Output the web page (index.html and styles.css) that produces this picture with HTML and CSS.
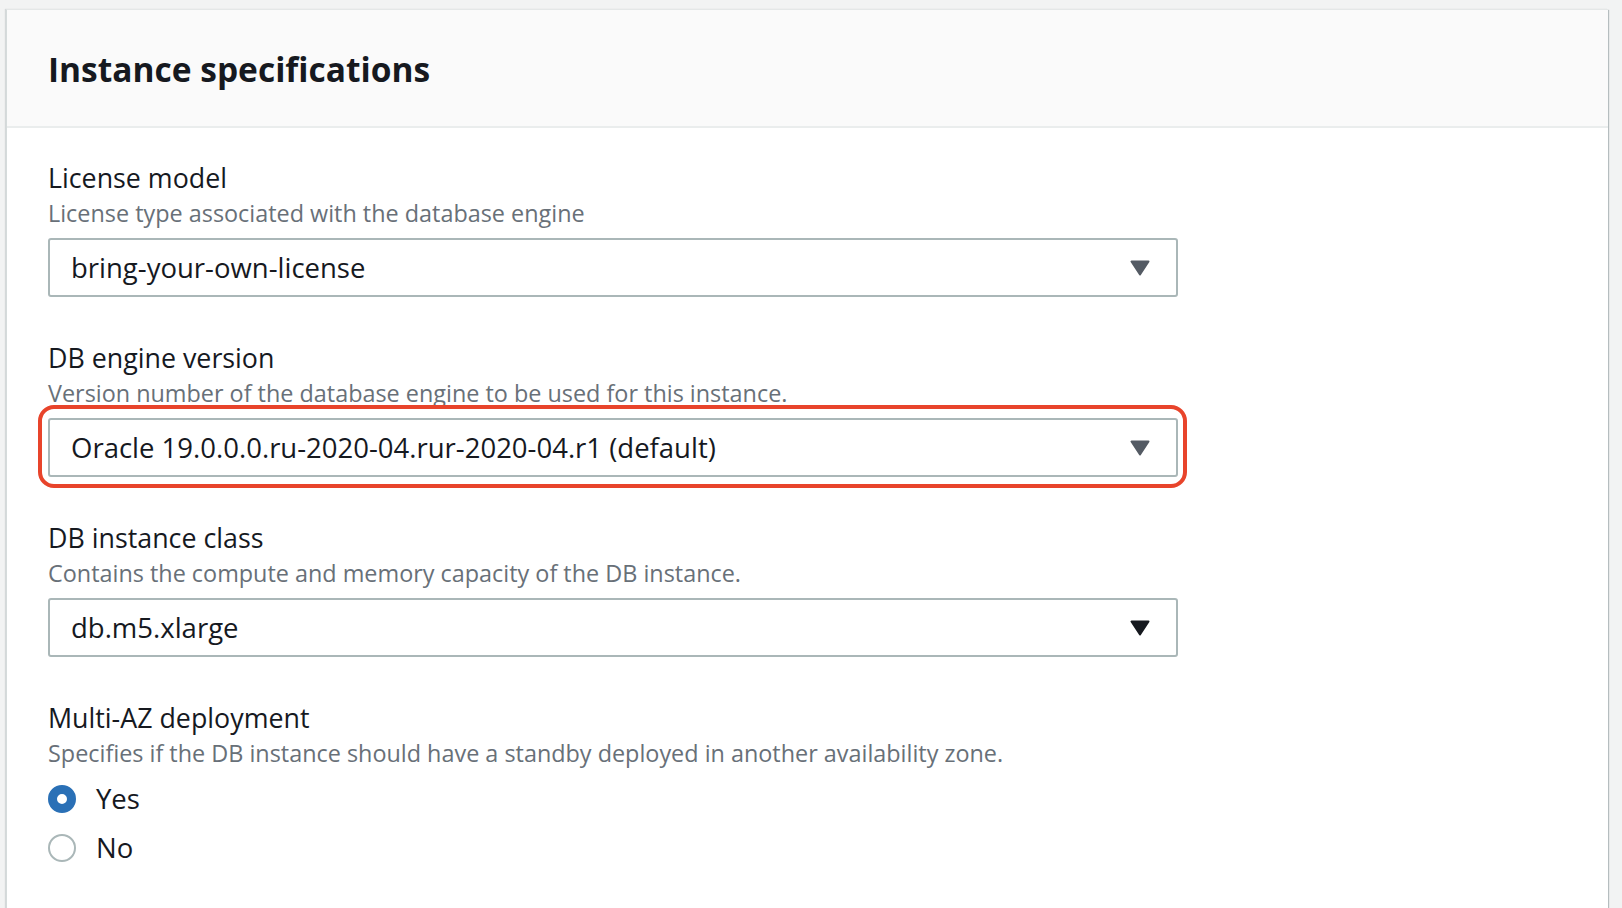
FILE: index.html
```html
<!DOCTYPE html>
<html lang="en">
<head>
<meta charset="utf-8">
<title>Instance specifications</title>
<link rel="stylesheet" href="styles.css">
</head>
<body>
<div class="card">
  <div class="card-header">
    <h2 class="title">Instance specifications</h2>
  </div>
  <div class="card-body">
    <div class="field">
      <div class="label">License model</div>
      <div class="desc">License type associated with the database engine</div>
      <div class="select-wrap">
        <div class="select">
          <span class="value">bring-your-own-license</span>
          <svg class="caret" width="20" height="16" viewBox="0 0 20 16"><path d="M1.5 1.5 H18.5 L10 14.5 Z" fill="#545b64" stroke="#545b64" stroke-width="2" stroke-linejoin="round"/></svg>
        </div>
      </div>
    </div>
    <div class="field">
      <div class="label">DB engine version</div>
      <div class="desc">Version number of the database engine to be used for this instance.</div>
      <div class="select-wrap">
        <div class="select">
          <span class="value">Oracle 19.0.0.0.ru-2020-04.rur-2020-04.r1 (default)</span>
          <svg class="caret" width="20" height="16" viewBox="0 0 20 16"><path d="M1.5 1.5 H18.5 L10 14.5 Z" fill="#545b64" stroke="#545b64" stroke-width="2" stroke-linejoin="round"/></svg>
        </div>
        <div class="highlight"></div>
      </div>
    </div>
    <div class="field">
      <div class="label">DB instance class</div>
      <div class="desc">Contains the compute and memory capacity of the DB instance.</div>
      <div class="select-wrap">
        <div class="select">
          <span class="value">db.m5.xlarge</span>
          <svg class="caret" width="20" height="16" viewBox="0 0 20 16"><path d="M1.5 1.5 H18.5 L10 14.5 Z" fill="#16191f" stroke="#16191f" stroke-width="2" stroke-linejoin="round"/></svg>
        </div>
      </div>
    </div>
    <div class="field">
      <div class="label">Multi-AZ deployment</div>
      <div class="desc">Specifies if the DB instance should have a standby deployed in another availability zone.</div>
      <div class="radios">
        <div class="radio-row">
          <span class="radio radio-checked"></span>
          <span class="radio-label">Yes</span>
        </div>
        <div class="radio-row">
          <span class="radio"></span>
          <span class="radio-label">No</span>
        </div>
      </div>
    </div>
  </div>
</div>
</body>
</html>
```
FILE: styles.css
```css
html, body {
  margin: 0;
  padding: 0;
}
body {
  background: #f2f3f3;
  font-family: "Open Sans", "Noto Sans", sans-serif;
  color: #16191f;
  height: 908px;
  overflow: hidden;
}
.card {
  margin: 9px 14px 0 6px;
  background: #ffffff;
  border-left: 1px solid #d5dbdb;
  border-top: 1px solid #e4e7e7;
  box-shadow: 1px 1px 1px 0 rgba(0, 28, 36, 0.25), -1px 0 1px 0 rgba(0, 28, 36, 0.12);
  min-height: 920px;
}
.card-header {
  background: #fafafa;
  border-bottom: 2px solid #eaeded;
  padding: 39px 41px 37px 41px;
}
.title {
  margin: 0;
  font-size: 33.5px;
  line-height: 40px;
  font-weight: 700;
  color: #16191f;
}
.card-body {
  padding: 32px 41px 0 41px;
}
.field {
  margin-bottom: 43px;
}
.label {
  font-size: 26.8px;
  line-height: 36px;
  color: #16191f;
}
.desc {
  margin-top: 0;
  font-size: 23.4px;
  line-height: 34px;
  color: #687078;
}
.select-wrap {
  position: relative;
  margin-top: 8px;
  width: 1130px;
}
.select {
  box-sizing: border-box;
  height: 59px;
  border: 2px solid #aab7b8;
  border-radius: 3px;
  display: flex;
  align-items: center;
  justify-content: space-between;
  padding: 0 26px 0 21px;
  background: #fff;
}
.value {
  font-size: 27.5px;
  line-height: 55px;
  color: #16191f;
}
.caret {
  display: block;
  margin-top: 1px;
}
.highlight {
  position: absolute;
  left: -10px;
  right: -9px;
  top: -13px;
  bottom: -11px;
  border: 4px solid #e8442b;
  border-radius: 16px;
  pointer-events: none;
}
.radios {
  margin-top: 4px;
  display: flex;
  flex-direction: column;
}
.radio-row {
  height: 49.5px;
  display: flex;
  align-items: center;
  gap: 20px;
}
.radio {
  box-sizing: border-box;
  width: 28px;
  height: 28px;
  border-radius: 50%;
  border: 2px solid #aab7b8;
  background: #fff;
  flex: none;
}
.radio-checked {
  border: 9px solid #2a70b6;
  background: #fff;
}
.radio-label {
  font-size: 27.5px;
  line-height: 36px;
  color: #16191f;
}
```
